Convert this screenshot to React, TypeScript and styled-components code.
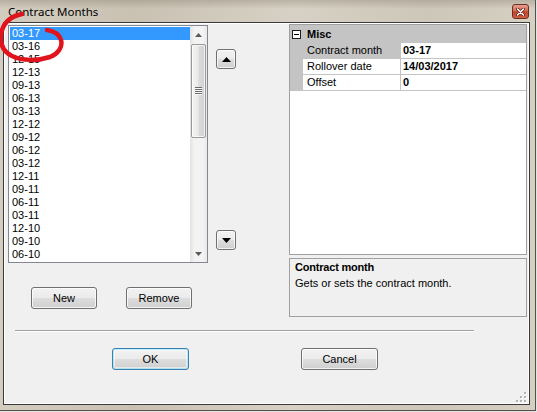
import React from "react";
import styled, { createGlobalStyle, css } from "styled-components";

const GlobalStyle = createGlobalStyle`
  html, body { margin: 0; padding: 0; }
  body {
    width: 537px; height: 412px; overflow: hidden;
    background: #eeeeee;
    font-family: "Liberation Sans", Arial, sans-serif;
    font-size: 11px; color: #000;
  }
  * { box-sizing: border-box; }
`;

const Desktop = styled.div`
  position: relative;
  width: 537px;
  height: 412px;
  overflow: hidden;
  background: #e4e4e4;
`;

const Window = styled.div`
  width: 536px;
  height: 411px;
  display: flex;
  flex-direction: column;
  padding: 0 5px 5px 3px;
  border-right: 1px solid #55514a;
  border-bottom: 1px solid #55514a;
  background:
    linear-gradient(180deg, rgba(110, 100, 85, 0.28), rgba(110, 100, 85, 0) 9px),
    linear-gradient(90deg, #d3cdc0 0%, #c9c2b3 25%, #d7d1c5 55%, #cdc7b9 80%, #d6d0c3 100%);
`;

const TitleBar = styled.div`
  height: 22px;
  display: flex;
  align-items: flex-start;
  justify-content: space-between;
  padding: 0 1px 0 5px;
`;

const Title = styled.span`
  font-family: "Noto Sans", "Open Sans", sans-serif;
  font-size: 11.5px;
  line-height: 16px;
  padding-top: 4px;
  color: #000;
`;

const CloseButton = styled.div`
  width: 17px;
  height: 15px;
  margin-top: 4px;
  border: 1px solid #6e2e22;
  border-radius: 3px;
  background: linear-gradient(180deg, #e6a08e 0%, #d66a52 45%, #c2432b 52%, #cf5e40 100%);
  display: flex;
  align-items: center;
  justify-content: center;
`;

const Client = styled.div`
  flex: 1;
  display: flex;
  flex-direction: column;
  background: #f0f0f0;
  border: 1px solid #3a3a3a;
  box-shadow: inset 0 0 0 1px #ffffff;
`;

const TopRow = styled.div`
  display: flex;
  align-items: flex-start;
  padding-left: 4px;
`;

const LeftCol = styled.div`
  width: 200px;
  margin-top: 2px;
  display: flex;
  flex-direction: column;
`;

const ListBox = styled.div`
  height: 238px;
  border: 1px solid #828790;
  background: #fff;
  display: flex;
`;

const Items = styled.div`
  flex: 1;
  padding: 1px 0 0 1px;
  overflow: hidden;
`;

const Item = styled.div<{ $selected?: boolean }>`
  height: 13px;
  line-height: 13px;
  padding-left: 2px;
  white-space: nowrap;
  ${(p) =>
    p.$selected &&
    css`
      background: #3399ff;
      color: #fff;
    `}
`;

const ScrollBar = styled.div`
  width: 17px;
  display: flex;
  flex-direction: column;
  background: linear-gradient(90deg, #e2e2e2 0%, #f3f3f3 25%, #f3f3f3 75%, #e9e9e9 100%);
`;

const ScrollArrow = styled.div`
  height: 17px;
  display: flex;
  align-items: center;
  justify-content: center;
`;

const Track = styled.div`
  flex: 1;
  display: flex;
  flex-direction: column;
`;

const Thumb = styled.div`
  height: 94px;
  margin: 1px 1px 0 1px;
  border: 1px solid #999;
  border-radius: 2px;
  background: linear-gradient(90deg, #f4f4f4 0%, #e9e9e9 45%, #dadada 55%, #d2d2d2 100%);
  box-shadow: inset 0 0 0 1px rgba(255, 255, 255, 0.7);
  display: flex;
  align-items: center;
  justify-content: center;
`;

const Gripper = styled.div`
  width: 7px;
  height: 8px;
  background: repeating-linear-gradient(180deg, #6b6b6b 0px, #6b6b6b 1px, #fafafa 1px, #fafafa 2px);
`;

const ListButtons = styled.div`
  display: flex;
  gap: 29px;
  margin-top: 24px;
  padding-left: 23px;
`;

const PushButton = styled.button<{ $w: number; $default?: boolean }>`
  width: ${(p) => p.$w}px;
  height: 22px;
  padding: 0;
  font-family: "Liberation Sans", Arial, sans-serif;
  font-size: 11px;
  color: #000;
  border: 1px solid #707070;
  border-radius: 3px;
  background: linear-gradient(180deg, #f2f2f2 0%, #ebebeb 48%, #dddddd 52%, #cfcfcf 100%);
  box-shadow: inset 0 0 0 1px rgba(255, 255, 255, 0.75);
  ${(p) =>
    p.$default &&
    css`
      border-color: #3c7fb1;
      box-shadow: inset 0 0 0 1px #48d2ff55, inset 0 0 0 2px rgba(255, 255, 255, 0.5);
    `}
`;

const ArrowCol = styled.div`
  width: 20px;
  margin: 26px 0 0 8px;
  display: flex;
  flex-direction: column;
  gap: 161px;
`;

const ArrowButton = styled.div`
  width: 20px;
  height: 20px;
  border: 1px solid #707070;
  border-radius: 3px;
  background: linear-gradient(180deg, #f2f2f2 0%, #ebebeb 48%, #dddddd 52%, #cfcfcf 100%);
  box-shadow: inset 0 0 0 1px rgba(255, 255, 255, 0.75);
  display: flex;
  align-items: center;
  justify-content: center;
`;

const RightCol = styled.div`
  width: 238px;
  margin: 1px 0 0 53px;
  display: flex;
  flex-direction: column;
  gap: 3px;
`;

const PropGrid = styled.div`
  height: 231px;
  border: 1px solid #a0a0a0;
  background: #fff;
`;

const CategoryRow = styled.div`
  height: 18px;
  background: #c4c4c4;
  display: flex;
  align-items: center;
  padding-left: 2px;
  font-weight: bold;
`;

const Expander = styled.div`
  width: 9px;
  height: 9px;
  border: 1px solid #1e1e1e;
  background: #fff;
  display: flex;
  align-items: center;
  justify-content: center;
  margin-right: 6px;
  &::after {
    content: "";
    width: 5px;
    height: 1px;
    background: #000;
  }
`;

const PropRow = styled.div`
  height: 16px;
  display: grid;
  grid-template-columns: 13px 97px 1fr;
  border-bottom: 1px solid #c4c4c4;
  line-height: 15px;
`;

const Margin = styled.div`
  background: #c4c4c4;
`;

const PropLabel = styled.div<{ $selected?: boolean }>`
  padding-left: 4px;
  background: ${(p) => (p.$selected ? "#c4c4c4" : "#fff")};
  white-space: nowrap;
`;

const PropValue = styled.div`
  border-left: 1px solid #c4c4c4;
  padding-left: 2px;
  font-weight: bold;
  white-space: nowrap;
`;

const HelpPanel = styled.div`
  height: 59px;
  border: 1px solid #a0a0a0;
  background: #f0f0f0;
  padding: 2px 5px;
  line-height: 13px;
`;

const HelpTitle = styled.div`
  font-weight: bold;
  letter-spacing: -0.2px;
`;

const HelpText = styled.div`
  margin-top: 3px;
`;

const Separator = styled.div`
  width: 459px;
  margin: 13px 0 0 11px;
  border-top: 1px solid #a0a0a0;
  border-bottom: 1px solid #fff;
`;

const DialogButtons = styled.div`
  display: flex;
  gap: 112px;
  margin-top: 16px;
  padding-left: 108px;
`;

const SizeGrip = styled.svg`
  margin-top: auto;
  align-self: flex-end;
  margin-right: 2px;
  margin-bottom: 1px;
`;

const Annotation = styled.svg`
  position: absolute;
  left: 0;
  top: 0;
  pointer-events: none;
`;

const months = [
  "03-17", "03-16", "12-15", "12-13", "09-13", "06-13", "03-13", "12-12", "09-12",
  "06-12", "03-12", "12-11", "09-11", "06-11", "03-11", "12-10", "09-10", "06-10",
];

const SmallTri = ({ up }: { up: boolean }) => (
  <svg width="7" height="4" viewBox="0 0 7 4">
    <path d={up ? "M0 4 L3.5 0 L7 4 Z" : "M0 0 L7 0 L3.5 4 Z"} fill="#5a5a5a" />
  </svg>
);

const BigTri = ({ up }: { up: boolean }) => (
  <svg width="9" height="5" viewBox="0 0 9 5">
    <path d={up ? "M0 5 L4.5 0 L9 5 Z" : "M0 0 L9 0 L4.5 5 Z"} fill="#000" />
  </svg>
);

export default function App() {
  return (
    <Desktop>
      <GlobalStyle />
      <Window>
        <TitleBar>
          <Title>Contract Months</Title>
          <CloseButton>
            <svg width="9" height="8" viewBox="0 0 9 8">
              <path d="M1.5 1 L7.5 7 M7.5 1 L1.5 7" stroke="#5a1a10" strokeWidth="3" strokeLinecap="round" />
              <path d="M1.5 1 L7.5 7 M7.5 1 L1.5 7" stroke="#fff" strokeWidth="1.6" strokeLinecap="round" />
            </svg>
          </CloseButton>
        </TitleBar>
        <Client>
          <TopRow>
            <LeftCol>
              <ListBox>
                <Items>
                  {months.map((m, i) => (
                    <Item key={m} $selected={i === 0}>
                      {m}
                    </Item>
                  ))}
                </Items>
                <ScrollBar>
                  <ScrollArrow>
                    <SmallTri up />
                  </ScrollArrow>
                  <Track>
                    <Thumb>
                      <Gripper />
                    </Thumb>
                  </Track>
                  <ScrollArrow>
                    <SmallTri up={false} />
                  </ScrollArrow>
                </ScrollBar>
              </ListBox>
              <ListButtons>
                <PushButton $w={66}>New</PushButton>
                <PushButton $w={66}>Remove</PushButton>
              </ListButtons>
            </LeftCol>
            <ArrowCol>
              <ArrowButton>
                <BigTri up />
              </ArrowButton>
              <ArrowButton>
                <BigTri up={false} />
              </ArrowButton>
            </ArrowCol>
            <RightCol>
              <PropGrid>
                <CategoryRow>
                  <Expander />
                  Misc
                </CategoryRow>
                <PropRow>
                  <Margin />
                  <PropLabel $selected>Contract month</PropLabel>
                  <PropValue>03-17</PropValue>
                </PropRow>
                <PropRow>
                  <Margin />
                  <PropLabel>Rollover date</PropLabel>
                  <PropValue>14/03/2017</PropValue>
                </PropRow>
                <PropRow>
                  <Margin />
                  <PropLabel>Offset</PropLabel>
                  <PropValue>0</PropValue>
                </PropRow>
              </PropGrid>
              <HelpPanel>
                <HelpTitle>Contract month</HelpTitle>
                <HelpText>Gets or sets the contract month.</HelpText>
              </HelpPanel>
            </RightCol>
          </TopRow>
          <Separator />
          <DialogButtons>
            <PushButton $w={77} $default>
              OK
            </PushButton>
            <PushButton $w={77}>Cancel</PushButton>
          </DialogButtons>
          <SizeGrip width="11" height="11" viewBox="0 0 11 11">
            {[
              [8, 0], [8, 4], [4, 4], [8, 8], [4, 8], [0, 8],
            ].map(([x, y], i) => (
              <g key={i}>
                <rect x={x + 1} y={y + 1} width="2" height="2" fill="#fff" />
                <rect x={x} y={y} width="2" height="2" fill="#b4b4b4" />
              </g>
            ))}
          </SizeGrip>
        </Client>
      </Window>
      <Annotation width="80" height="80" viewBox="0 0 80 80">
        <path
          d="M22 14 C 12 16, 4 22, 1.5 32 C -0.5 42, 2 51, 12 56 C 22 61, 38 61, 50 57 C 58 54, 63 47, 61 40 C 59 34, 54 31, 47 30"
          fill="none"
          stroke="#e0141c"
          strokeWidth="4.5"
          strokeLinecap="round"
        />
      </Annotation>
    </Desktop>
  );
}
